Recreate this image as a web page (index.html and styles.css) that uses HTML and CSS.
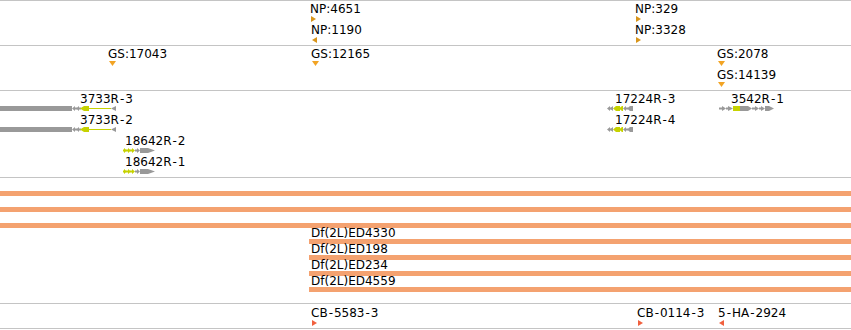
FILE: index.html
```html
<!DOCTYPE html>
<html>
<head>
<meta charset="utf-8">
<link rel="stylesheet" href="styles.css">
</head>
<body>
<div class="browser">
  <div class="track t-np">
    <div class="feat" style="left:310px;top:1px"><span class="lbl">NP:4651</span><svg class="tri np" width="6" height="6"><polygon points="0,0 5,3 0,6"/></svg></div>
    <div class="feat" style="left:311px;top:22px"><span class="lbl">NP:1190</span><svg class="tri np" width="6" height="6"><polygon points="5,0 0,3 5,6"/></svg></div>
    <div class="feat" style="left:635px;top:1px"><span class="lbl">NP:329</span><svg class="tri np" width="6" height="6"><polygon points="0,0 5,3 0,6"/></svg></div>
    <div class="feat" style="left:635px;top:22px"><span class="lbl">NP:3328</span><svg class="tri np" width="6" height="6"><polygon points="0,0 5,3 0,6"/></svg></div>
  </div>
  <div class="track t-gs">
    <div class="feat" style="left:108px;top:1px"><span class="lbl">GS:17043</span><svg class="tri gs" width="7" height="5"><polygon points="0,0 7,0 3.5,5"/></svg></div>
    <div class="feat" style="left:311px;top:1px"><span class="lbl">GS:12165</span><svg class="tri gs" width="7" height="5"><polygon points="0,0 7,0 3.5,5"/></svg></div>
    <div class="feat" style="left:717px;top:1px"><span class="lbl">GS:2078</span><svg class="tri gs" width="7" height="5"><polygon points="0,0 7,0 3.5,5"/></svg></div>
    <div class="feat" style="left:717px;top:22px"><span class="lbl">GS:14139</span><svg class="tri gs" width="7" height="5"><polygon points="0,0 7,0 3.5,5"/></svg></div>
  </div>
  <div class="track t-genes">
    <span class="glbl" style="left:80px;top:1px">3733R<span class="h">-</span>3</span>
    <svg class="gene" style="left:0;top:15px" width="117" height="5">
      <rect class="g" x="0" y="0" width="72" height="5"/>
      <polygon class="g" points="72,2.5 75,0 75,1.5 77,1.5 77,3.5 75,3.5 75,5"/>
      <polygon class="g" points="76,2.5 79,0 79,1.5 81,1.5 81,3.5 79,3.5 79,5"/>
      <polygon class="y" points="80,2.5 84,0 84,5"/>
      <rect class="y" x="84" y="0" width="5" height="5"/>
      <rect class="y" x="89" y="2" width="22" height="1"/>
      <polygon class="g" points="111,2.5 116,0 116,5"/>
    </svg>
    <span class="glbl" style="left:80px;top:22px">3733R<span class="h">-</span>2</span>
    <svg class="gene" style="left:0;top:36px" width="117" height="5">
      <rect class="g" x="0" y="0" width="72" height="5"/>
      <polygon class="g" points="72,2.5 75,0 75,1.5 77,1.5 77,3.5 75,3.5 75,5"/>
      <polygon class="g" points="76,2.5 79,0 79,1.5 81,1.5 81,3.5 79,3.5 79,5"/>
      <polygon class="y" points="80,2.5 84,0 84,5"/>
      <rect class="y" x="84" y="0" width="5" height="5"/>
      <rect class="y" x="89" y="2" width="22" height="1"/>
      <polygon class="g" points="111,2.5 116,0 116,5"/>
    </svg>
    <span class="glbl" style="left:125px;top:43px">18642R<span class="h">-</span>2</span>
    <svg class="gene" style="left:122px;top:57px" width="34" height="5">
      <polygon class="y" points="1,1.5 2,1.5 2,0 5,2.5 2,5 2,3.5 1,3.5"/>
      <polygon class="y" points="4,1.5 6,1.5 6,0 9,2.5 6,5 6,3.5 4,3.5"/>
      <polygon class="y" points="8,1.5 10,1.5 10,0 13,2.5 10,5 10,3.5 8,3.5"/>
      <polygon class="g" points="13,1.5 15,1.5 15,0 18,2.5 15,5 15,3.5 13,3.5"/>
      <rect class="g" x="18" y="0" width="8" height="5"/>
      <polygon class="g" points="26,0 33,2.5 26,5"/>
    </svg>
    <span class="glbl" style="left:125px;top:64px">18642R<span class="h">-</span>1</span>
    <svg class="gene" style="left:122px;top:78px" width="34" height="5">
      <polygon class="y" points="1,1.5 2,1.5 2,0 5,2.5 2,5 2,3.5 1,3.5"/>
      <polygon class="y" points="4,1.5 6,1.5 6,0 9,2.5 6,5 6,3.5 4,3.5"/>
      <polygon class="y" points="8,1.5 10,1.5 10,0 13,2.5 10,5 10,3.5 8,3.5"/>
      <polygon class="g" points="13,1.5 15,1.5 15,0 18,2.5 15,5 15,3.5 13,3.5"/>
      <rect class="g" x="18" y="0" width="8" height="5"/>
      <polygon class="g" points="26,0 33,2.5 26,5"/>
    </svg>
    <span class="glbl" style="left:615px;top:1px">17224R<span class="h">-</span>3</span>
    <svg class="gene" style="left:606px;top:15px" width="28" height="5">
      <polygon class="g" points="1,2.5 4,0 4,1.5 6,1.5 6,3.5 4,3.5 4,5"/>
      <polygon class="g" points="4,2.5 7,0 7,5"/>
      <polygon class="y" points="7,2.5 10,0 10,5"/>
      <rect class="y" x="10" y="0" width="4" height="5"/>
      <polygon class="y" points="13,2.5 16,0 16,5"/>
      <rect class="y" x="16" y="0" width="1" height="5"/>
      <polygon class="g" points="17,2.5 20,0 20,1.5 22,1.5 22,3.5 20,3.5 20,5"/>
      <polygon class="g" points="21,2.5 24,0 24,5"/>
      <rect class="g" x="24" y="0" width="3" height="5"/>
    </svg>
    <span class="glbl" style="left:615px;top:22px">17224R<span class="h">-</span>4</span>
    <svg class="gene" style="left:606px;top:36px" width="28" height="5">
      <polygon class="g" points="1,2.5 4,0 4,1.5 6,1.5 6,3.5 4,3.5 4,5"/>
      <polygon class="g" points="4,2.5 7,0 7,5"/>
      <polygon class="y" points="7,2.5 10,0 10,5"/>
      <rect class="y" x="10" y="0" width="4" height="5"/>
      <polygon class="y" points="13,2.5 16,0 16,5"/>
      <rect class="y" x="16" y="0" width="1" height="5"/>
      <polygon class="g" points="17,2.5 20,0 20,1.5 22,1.5 22,3.5 20,3.5 20,5"/>
      <polygon class="g" points="21,2.5 24,0 24,5"/>
      <rect class="g" x="24" y="0" width="3" height="5"/>
    </svg>
    <span class="glbl" style="left:731px;top:1px">3542R<span class="h">-</span>1</span>
    <svg class="gene" style="left:719px;top:15px" width="56" height="5">
      <rect class="g" x="0" y="1.5" width="4" height="2"/>
      <polygon class="g" points="3,0 7,2.5 3,5"/>
      <rect class="g" x="7" y="1.5" width="3" height="2"/>
      <polygon class="g" points="9,0 14,2.5 9,5"/>
      <rect class="y" x="14" y="0" width="7" height="5"/>
      <rect class="g" x="21" y="0" width="8" height="5"/>
      <polygon class="g" points="29,0 33,2.5 29,5"/>
      <rect class="g" x="33" y="1.5" width="3" height="2"/>
      <polygon class="g" points="36,0 40,2.5 36,5"/>
      <rect class="g" x="40" y="1.5" width="2" height="2"/>
      <polygon class="g" points="42,0 46,2.5 42,5"/>
      <rect class="g" x="46" y="0" width="4" height="5"/>
      <polygon class="g" points="50,0 55,2.5 50,5"/>
    </svg>
  </div>
  <div class="track t-df">
    <div class="bar"></div>
    <div class="bar"></div>
    <div class="bar"></div>
    <div class="df"><span class="dflbl">Df(2L)ED4330</span><div class="bar"></div></div>
    <div class="df"><span class="dflbl">Df(2L)ED198</span><div class="bar"></div></div>
    <div class="df"><span class="dflbl">Df(2L)ED234</span><div class="bar"></div></div>
    <div class="df"><span class="dflbl">Df(2L)ED4559</span><div class="bar"></div></div>
  </div>
  <div class="track t-cb">
    <div class="feat" style="left:311px;top:2px"><span class="lbl">CB<span class="h">-</span>5583<span class="h">-</span>3</span><svg class="tri cb" width="6" height="6"><polygon points="0,0 5,3 0,6"/></svg></div>
    <div class="feat" style="left:637px;top:2px"><span class="lbl">CB<span class="h">-</span>0114<span class="h">-</span>3</span><svg class="tri cb" width="6" height="6"><polygon points="0,0 5,3 0,6"/></svg></div>
    <div class="feat" style="left:718px;top:2px"><span class="lbl">5<span class="h">-</span>HA<span class="h">-</span>2924</span><svg class="tri cb" width="6" height="6"><polygon points="5,0 0,3 5,6"/></svg></div>
  </div>
</div>
</body>
</html>
```
FILE: styles.css
```css
html, body {
  margin: 0;
  padding: 0;
  background: #ffffff;
}
.browser {
  width: 851px;
  font-family: "DejaVu Sans", Verdana, sans-serif;
  font-size: 12px;
  color: #000;
  border-bottom: 1px solid #c4c4c4;
}
.track {
  position: relative;
  border-top: 1px solid #c4c4c4;
  overflow: hidden;
}
.t-np { height: 44px; }
.t-gs { height: 44px; }
.t-genes { height: 86px; }
.t-df {
  height: 126px;
  box-sizing: border-box;
  padding-top: 13px;
  display: flex;
  flex-direction: column;
}
.t-cb { height: 24px; }

.feat {
  position: absolute;
  display: flex;
  flex-direction: column;
}
.lbl, .glbl {
  display: block;
  line-height: 14px;
  white-space: nowrap;
}
.glbl { position: absolute; }
.h { padding: 0 1px; }
.tri { display: block; margin-left: 1px; }
.tri.np polygon { fill: #d8951a; }
.tri.gs polygon { fill: #f2a424; }
.tri.cb polygon { fill: #f1603e; }

.gene { position: absolute; display: block; }
.gene .g { fill: #999999; }
.gene .y { fill: #c6d200; }

.bar {
  height: 5px;
  background: #f4a270;
}
.t-df > .bar { margin-bottom: 11px; }
.t-df > .bar:nth-child(3) { margin-bottom: 0; }
.df {
  margin-left: 309px;
  display: flex;
  flex-direction: column;
}
.dflbl {
  line-height: 11px;
  padding-left: 2px;
  white-space: nowrap;
}
```
